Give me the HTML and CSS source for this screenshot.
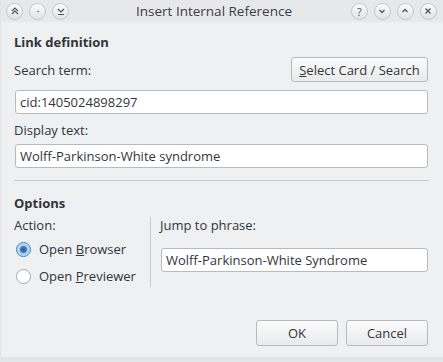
FILE: index.html
```html
<!DOCTYPE html>
<html lang="en">
<head>
    <meta charset="UTF-8">
    <title>Insert Internal Reference</title>
    <link rel="stylesheet" href="styles.css">
</head>
<body>
<div class="window">
    <div class="titlebar">
        <div class="tb-group">
            <span class="tb-btn">
                <svg width="10" height="10" viewBox="0 0 10 10"><path d="M2 5 L5 2 L8 5 M2 8 L5 5 L8 8" fill="none" stroke="#555" stroke-width="1.2"/></svg>
            </span>
            <span class="tb-btn">
                <svg width="10" height="10" viewBox="0 0 10 10"><circle cx="5" cy="5.5" r="0.8" fill="#555"/></svg>
            </span>
            <span class="tb-btn">
                <svg width="10" height="10" viewBox="0 0 10 10"><path d="M2 3 L5 6 L8 3 M2 8.5 H8" fill="none" stroke="#555" stroke-width="1.2"/></svg>
            </span>
        </div>
        <div class="tb-title">Insert Internal Reference</div>
        <div class="tb-group">
            <span class="tb-btn tb-help">?</span>
            <span class="tb-btn">
                <svg width="10" height="10" viewBox="0 0 10 10"><path d="M2.5 4 L5 6.5 L7.5 4" fill="none" stroke="#555" stroke-width="1.3"/></svg>
            </span>
            <span class="tb-btn">
                <svg width="10" height="10" viewBox="0 0 10 10"><path d="M2.5 6 L5 3.5 L7.5 6" fill="none" stroke="#555" stroke-width="1.3"/></svg>
            </span>
            <span class="tb-btn">
                <svg width="10" height="10" viewBox="0 0 10 10"><path d="M2.5 2.5 L7.5 7.5 M7.5 2.5 L2.5 7.5" fill="none" stroke="#555" stroke-width="1.3"/></svg>
            </span>
        </div>
    </div>

    <div class="content">
        <div class="section-title">Link definition</div>
        <div class="search-row">
            <label class="lbl">Search term:</label>
            <button class="btn btn-select"><u>S</u>elect Card / Search</button>
        </div>
        <div class="field">cid:1405024898297</div>
        <label class="lbl lbl-display">Display text:</label>
        <div class="field">Wolff-Parkinson-White syndrome</div>

        <div class="separator"></div>

        <div class="section-title options-title">Options</div>
        <div class="options">
            <div class="action-col">
                <div class="lbl">Action:</div>
                <div class="radio-row">
                    <span class="radio checked"></span>
                    <span>Open <u>B</u>rowser</span>
                </div>
                <div class="radio-row">
                    <span class="radio"></span>
                    <span>Open <u>P</u>reviewer</span>
                </div>
            </div>
            <div class="jump-col">
                <div class="lbl">Jump to phrase:</div>
                <div class="field">Wolff-Parkinson-White Syndrome</div>
            </div>
        </div>

        <div class="buttons">
            <button class="btn btn-dlg">OK</button>
            <button class="btn btn-dlg">Cancel</button>
        </div>
    </div>
</div>
</body>
</html>
```

FILE: styles.css
```css
* {
    margin: 0;
    padding: 0;
    box-sizing: border-box;
}
body {
    font-family: "Open Sans", "Noto Sans", sans-serif;
    font-size: 13px;
    color: #31363b;
    background-color: #eff0f1;
}
.window {
    width: 443px;
    height: 362px;
    display: flex;
    flex-direction: column;
    border-left: 1px solid #e3e4e6;
    border-bottom: 5px solid #e3e4e6;
}

/* title bar */
.titlebar {
    height: 22px;
    background-color: #e7e8ea;
    display: flex;
    align-items: center;
    justify-content: space-between;
    padding: 0 6px 0 5px;
}
.tb-group {
    display: flex;
    gap: 6px;
}
.tb-btn {
    width: 17px;
    height: 17px;
    border-radius: 50%;
    border: 1px solid #c4c6c9;
    background: linear-gradient(#fafafa, #e2e3e5);
    display: flex;
    align-items: center;
    justify-content: center;
}
.tb-help {
    font-size: 11px;
    color: #555;
    line-height: 1;
}
.tb-title {
    font-size: 13.5px;
    color: #3b4045;
    padding-left: 8px;
}

.content {
    flex: 1;
    padding: 12px 14px 0 13px;
    display: flex;
    flex-direction: column;
}
.section-title {
    font-weight: bold;
    height: 16px;
    line-height: 16px;
}
.search-row {
    display: flex;
    justify-content: space-between;
    align-items: center;
    margin-top: 7px;
}
.lbl {
    line-height: 16px;
}
.btn {
    font-family: inherit;
    font-size: 13px;
    color: #31363b;
    border: 1px solid #b8babd;
    border-radius: 3px;
    background: linear-gradient(#fbfbfb, #e9eaeb);
}
.btn u {
    text-decoration-thickness: 1px;
}
.btn-select {
    width: 137px;
    height: 25px;
    margin-right: 1px;
}
.field {
    height: 24px;
    margin: 8px 1px 0 1px;
    background-color: #fff;
    border: 1px solid #b8babd;
    border-radius: 3px;
    padding: 0 4px;
    line-height: 22px;
}
.lbl-display {
    margin-top: 8px;
}
.lbl-display + .field {
    margin-top: 6px;
}
.separator {
    height: 1px;
    background-color: #c9cbce;
    margin: 12px 0 0 0;
}
.options-title {
    margin-top: 14px;
}
.options {
    display: flex;
    margin-top: 6px;
}
.action-col {
    width: 137px;
    border-right: 1px solid #c9cbce;
    padding-bottom: 2px;
}
.radio-row {
    display: flex;
    align-items: center;
    gap: 8px;
    height: 18px;
    margin-top: 7px;
    padding-left: 2px;
}
.radio-row + .radio-row {
    margin-top: 9px;
}
.radio {
    width: 15px;
    height: 15px;
    border-radius: 50%;
    border: 1px solid #a7a9ac;
    background-color: #fff;
}
.radio.checked {
    border-color: #3a82c4;
    background: radial-gradient(circle, #2d5f94 0, #3d7fc0 3px, #a9c8e8 4px, #cfe0f1 7px);
}
.jump-col {
    flex: 1;
    padding-left: 9px;
}
.jump-col .field {
    margin-top: 15px;
}
.buttons {
    margin-top: auto;
    margin-bottom: 11px;
    display: flex;
    justify-content: flex-end;
    gap: 8px;
    padding-right: 1px;
}
.btn-dlg {
    width: 82px;
    height: 26px;
}
```
